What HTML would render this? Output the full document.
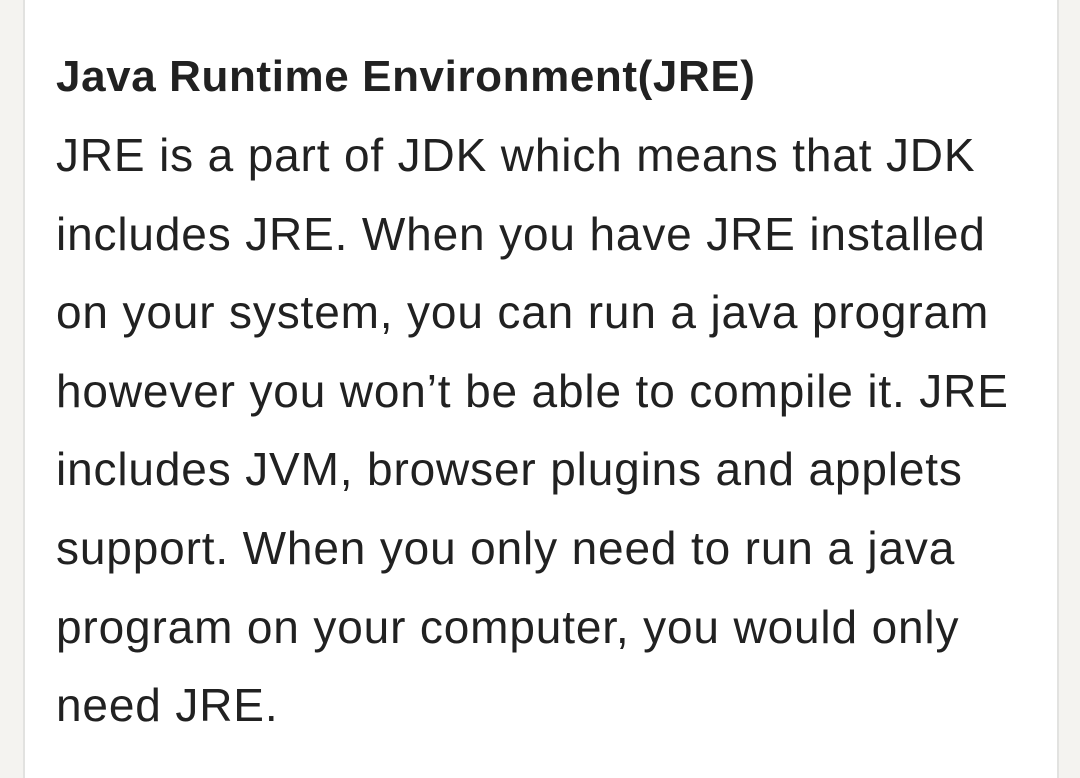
<!DOCTYPE html>
<html><head><style>
html,body{margin:0;padding:0;width:1080px;height:778px;overflow:hidden;background:#f4f3f0;}
.card{position:absolute;left:23px;top:0;width:1032px;height:778px;background:#fff;border-left:2px solid #e2e2e0;border-right:2px solid #e2e2e0;}
.t{position:absolute;left:56px;top:51px;font:bold 44px/52px "Liberation Sans",sans-serif;letter-spacing:0.6px;color:#212121;white-space:nowrap;}
.b{position:absolute;left:56px;top:116px;font:46px/78.6px "Liberation Sans",sans-serif;letter-spacing:0.85px;color:#212121;white-space:nowrap;}
</style></head><body>
<div class="card"></div>
<div class="t">Java Runtime Environment(JRE)</div>
<div class="b">JRE is a part of JDK which means that JDK<br>includes JRE. When you have JRE installed<br>on your system, you can run a java program<br>however you won’t be able to compile it. JRE<br>includes JVM, browser plugins and applets<br>support. When you only need to run a java<br>program on your computer, you would only<br>need JRE.</div>
</body></html>
